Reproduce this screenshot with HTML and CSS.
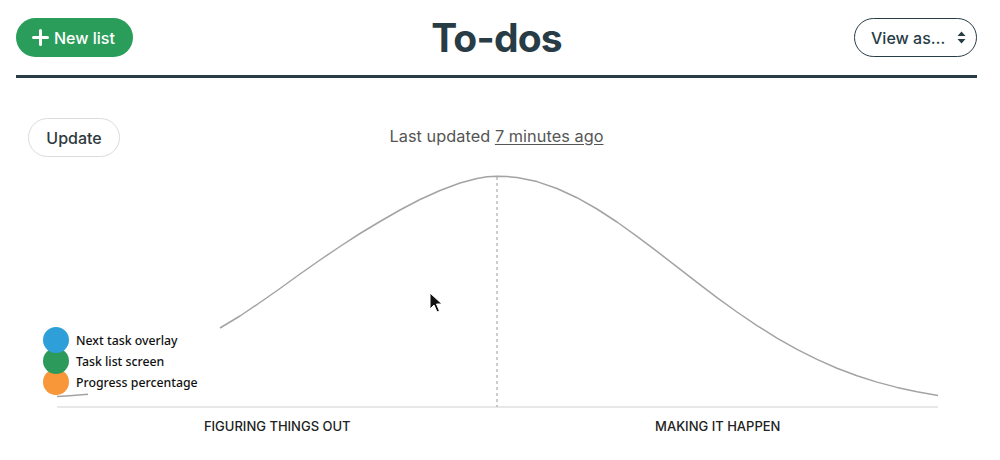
FILE: index.html
```html
<!DOCTYPE html>
<html lang="en">
<head>
<meta charset="utf-8">
<title>To-dos</title>
<link rel="stylesheet" href="styles.css">
</head>
<body>
<div class="page">
  <header class="header">
    <div class="header-left">
      <button class="btn-new">
        <svg class="plus" width="17" height="17" viewBox="0 0 17 17"><path d="M8.5 1.5v14M1.5 8.5h14" stroke="#fff" stroke-width="3" stroke-linecap="round"/></svg>
        New list
      </button>
    </div>
    <h1 class="title">To-dos</h1>
    <div class="header-right">
      <button class="btn-view">View as…
        <svg class="updown" width="9" height="13" viewBox="0 0 9 13"><path d="M4.5 0.5L8.5 5H0.5Z M4.5 12.5L8.5 8H0.5Z" fill="#283c46"/></svg>
      </button>
    </div>
  </header>

  <div class="toolbar">
    <div class="toolbar-left"><button class="btn-update">Update</button></div>
    <p class="updated">Last updated <a href="#" class="updated-link">7 minutes ago</a></p>
    <div class="toolbar-right"></div>
  </div>

  <div class="chart">
    <svg class="hill" width="961" height="250" viewBox="16 160 961 250">
      <line x1="57" y1="407" x2="938" y2="407" stroke="#e8e8e8" stroke-width="2"/>
      <line x1="497" y1="177" x2="497" y2="407" stroke="#9a9a9a" stroke-width="1" stroke-dasharray="3 3"/>
      <path d="M57 396.6 L66 396 L76 395.3 L88 394.2" fill="none" stroke="#a3a3a3" stroke-width="1.5"/>
      <path d="M220 328 L240 316 L260 302.5 L280 288.5 L300 274 L320 260 L340 246.5 L360 233.5 L380 221.5 L400 210 L420 199.5 L440 190.5 L460 183 L477 178.5 L487 176.8 L497 176.2 L507 176.6 L517 177.4 L537 181.6 L557 188.5 L577 197.7 L597 209 L617 222 L637 236.3 L657 251.4 L677 266.9 L697 282.4 L717 297.6 L737 312 L757 325.6 L777 338.1 L797 349.4 L817 359.4 L837 368.2 L857 375.7 L877 382.1 L897 387.4 L917 391.8 L938 395.6" fill="none" stroke="#a3a3a3" stroke-width="1.5" stroke-linejoin="round"/>
    </svg>

    <ul class="legend">
      <li class="legend-item"><span class="dot dot-blue"></span><span class="legend-label">Next task overlay</span></li>
      <li class="legend-item"><span class="dot dot-green"></span><span class="legend-label">Task list screen</span></li>
      <li class="legend-item"><span class="dot dot-orange"></span><span class="legend-label">Progress percentage</span></li>
    </ul>

    <svg class="cursor" width="14" height="22" viewBox="0 0 14 22"><path d="M1 1 L1 17 L5 13 L8 20 L10.5 19 L7.5 12 L13 12 Z" fill="#111" stroke="#fff" stroke-width="1"/></svg>

    <div class="phases">
      <span class="phase">Figuring things out</span>
      <span class="phase">Making it happen</span>
    </div>
  </div>
</div>
</body>
</html>
```

FILE: styles.css
```css
* { box-sizing: border-box; }

body {
  margin: 0;
  background: #fff;
  font-family: Inter, "Liberation Sans", sans-serif;
  color: #283c46;
}

.page {
  width: 1000px;
  padding: 0 23px 0 16px;
}

.header {
  display: grid;
  grid-template-columns: 1fr auto 1fr;
  align-items: center;
  padding: 18px 0 18px;
  border-bottom: 3px solid #283c46;
}

.header-right {
  display: flex;
  justify-content: flex-end;
}

.btn-new {
  display: inline-flex;
  align-items: center;
  gap: 5px;
  height: 39px;
  width: 117px;
  padding: 0 0 0 16px;
  border: none;
  border-radius: 20px;
  background: #2b9d5b;
  color: #fff;
  font-family: Inter, "Liberation Sans", sans-serif;
  font-size: 16px;
  font-weight: 500;
}

.title {
  margin: 0;
  font-size: 39px;
  font-weight: 700;
  letter-spacing: -0.8px;
  line-height: 39px;
  color: #283c46;
}

.btn-view {
  display: inline-flex;
  align-items: center;
  gap: 8px;
  height: 39px;
  width: 123px;
  padding: 0 0 0 16px;
  border: 1.5px solid #283c46;
  border-radius: 20px;
  background: #fff;
  color: #283c46;
  font-family: Inter, "Liberation Sans", sans-serif;
  font-size: 16px;
  font-weight: 500;
}

.updown { margin-left: 4px; }

.toolbar {
  display: grid;
  grid-template-columns: 1fr auto 1fr;
  align-items: center;
  margin-top: 40px;
  padding: 0 12px;
}

.btn-update {
  height: 39px;
  width: 92px;
  border: 1px solid #dcdcdc;
  border-radius: 20px;
  background: #fff;
  color: #2f3a40;
  font-family: Inter, "Liberation Sans", sans-serif;
  font-size: 16px;
  font-weight: 500;
}

.updated {
  margin: 0 0 3px;
  font-size: 16.3px;
  letter-spacing: 0.05px;
  color: #555;
}

.updated-link {
  color: #555;
  text-decoration: underline;
  text-underline-offset: 2px;
}

.chart {
  position: relative;
  margin-top: 3px;
}

.hill { display: block; }

.legend {
  position: absolute;
  left: 27px;
  top: 169px;
  margin: 0;
  padding: 0;
  list-style: none;
  display: flex;
  flex-direction: column;
}

.legend-item {
  display: flex;
  align-items: center;
  gap: 7px;
  height: 21px;
}

.dot {
  position: relative;
  width: 26px;
  height: 26px;
  margin: -2.5px 0;
  border-radius: 50%;
}

.dot-blue { background: #2e9fd9; z-index: 3; }
.dot-green { background: #2b9a5a; z-index: 2; }
.dot-orange { background: #f7973a; z-index: 1; }

.legend-label {
  font-family: "Noto Sans", "DejaVu Sans", sans-serif;
  font-size: 12.3px;
  font-weight: 500;
  color: #111;
  padding-top: 2px;
}

.cursor {
  position: absolute;
  left: 413px;
  top: 132px;
}

.phases {
  display: flex;
  padding-left: 41px;
  width: 922px;
  margin-top: 8px;
}

.phase {
  flex: 1;
  text-align: center;
  font-size: 13px;
  font-weight: 500;
  text-transform: uppercase;
  color: #222;
}
```
